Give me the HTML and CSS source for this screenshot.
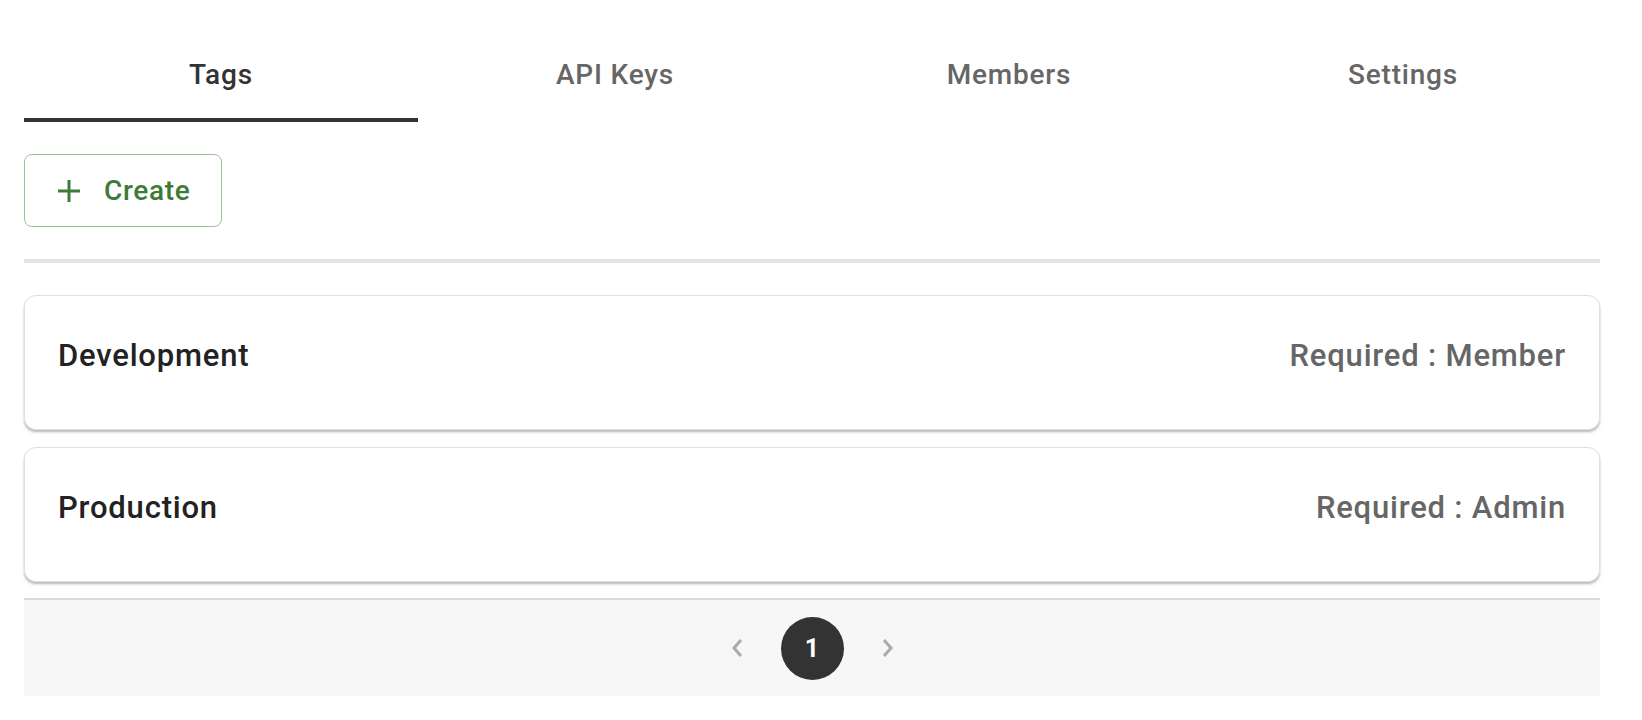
FILE: index.html
```html
<!DOCTYPE html>
<html>
<head>
<meta charset="utf-8">
<link rel="stylesheet" href="styles.css">
</head>
<body>
<div class="page">
  <nav class="tabs">
    <div class="tab active">Tags</div>
    <div class="tab">API Keys</div>
    <div class="tab">Members</div>
    <div class="tab">Settings</div>
  </nav>
  <div class="toolbar">
    <button class="create-btn">
      <svg class="plus" viewBox="0 0 24 24" width="24" height="24"><path d="M12 1v22M1 12h22" stroke="currentColor" stroke-width="3" fill="none"/></svg>
      <span>Create</span>
    </button>
  </div>
  <div class="divider"></div>
  <div class="list">
    <div class="card">
      <div class="card-title">Development</div>
      <div class="card-meta">Required : Member</div>
    </div>
    <div class="card">
      <div class="card-title">Production</div>
      <div class="card-meta">Required : Admin</div>
    </div>
  </div>
  <div class="pager">
    <span class="chev"><svg viewBox="0 0 12 20" width="12" height="20"><path d="M10 2L3 10l7 8" stroke="currentColor" stroke-width="3" fill="none"/></svg></span>
    <span class="page-num">1</span>
    <span class="chev"><svg viewBox="0 0 12 20" width="12" height="20"><path d="M2 2l7 8-7 8" stroke="currentColor" stroke-width="3" fill="none"/></svg></span>
  </div>
</div>
</body>
</html>
```

FILE: styles.css
```css
html, body {
  margin: 0;
  padding: 0;
  background: #fff;
}
body {
  font-family: Roboto, "Liberation Sans", sans-serif;
}
.page {
  padding: 24px 42px 0 24px;
  display: flex;
  flex-direction: column;
}
.tabs {
  display: grid;
  grid-template-columns: repeat(4, 1fr);
  height: 98px;
}
.tab {
  display: flex;
  align-items: center;
  justify-content: center;
  font-size: 28px;
  font-weight: 500;
  letter-spacing: 0.8px;
  color: #666;
  border-bottom: 4px solid transparent;
  padding-top: 6px;
}
.tab.active {
  color: #333;
  border-bottom-color: #333;
}
.toolbar {
  margin-top: 32px;
  display: flex;
}
.create-btn {
  display: flex;
  align-items: center;
  gap: 23px;
  height: 73px;
  width: 198px;
  padding: 0 0 0 32px;
  box-sizing: border-box;
  background: #fff;
  border: 1.5px solid #9cc098;
  border-radius: 8px;
  color: #3e7b38;
  font-family: Roboto, "Liberation Sans", sans-serif;
  font-size: 28px;
  font-weight: 500;
  letter-spacing: 0.7px;
}
.plus {
  flex: none;
}
.divider {
  margin-top: 32px;
  height: 4px;
  background: #e3e3e3;
}
.list {
  margin-top: 32px;
  display: flex;
  flex-direction: column;
  gap: 17px;
}
.card {
  height: 135px;
  box-sizing: border-box;
  border: 1.5px solid #e0e0e0;
  border-radius: 12px;
  box-shadow: 0 2px 2px rgba(0,0,0,0.22), 0 3px 4px rgba(0,0,0,0.06);
  background: #fff;
  display: flex;
  align-items: center;
  justify-content: space-between;
  padding: 0 33px 14px 33px;
}
.card-title {
  font-size: 31px;
  font-weight: 500;
  letter-spacing: 0.8px;
  color: #222;
}
.card-meta {
  font-size: 31px;
  font-weight: 500;
  letter-spacing: 0.8px;
  color: #666;
}
.pager {
  margin-top: 16px;
  height: 98px;
  box-sizing: border-box;
  border-top: 2px solid #dadada;
  background: #f7f7f7;
  display: flex;
  align-items: center;
  justify-content: center;
  gap: 38px;
}
.chev {
  color: #aaa;
  display: flex;
}
.page-num {
  width: 63px;
  height: 63px;
  border-radius: 50%;
  background: #333;
  color: #fff;
  font-size: 25px;
  font-weight: 700;
  display: flex;
  align-items: center;
  justify-content: center;
}
```
